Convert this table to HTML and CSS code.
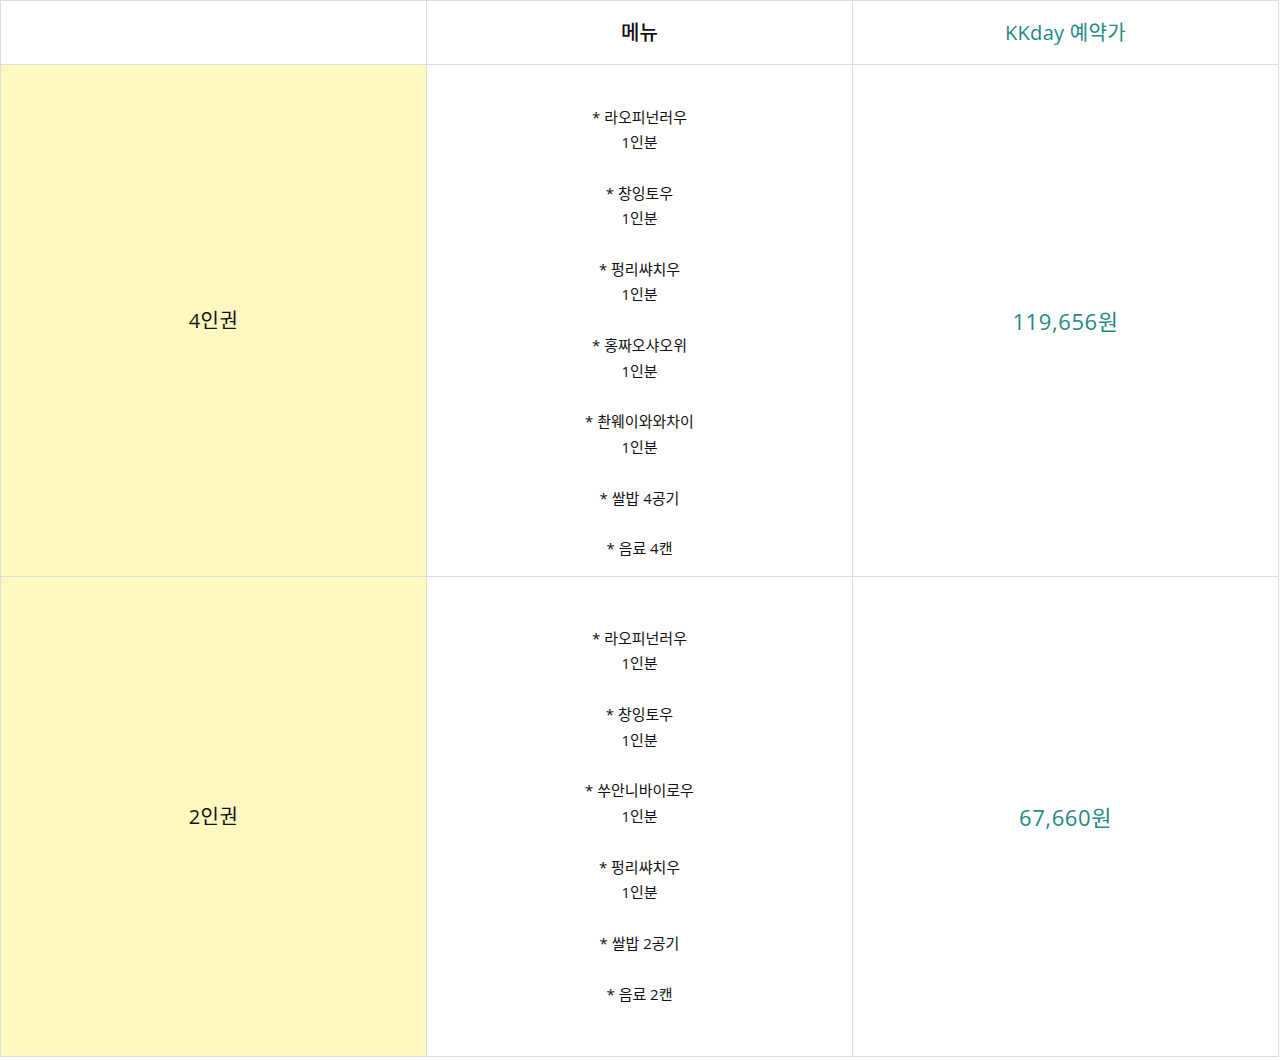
FILE: index.html
```html
<!DOCTYPE html>
<html lang="ko">
<head>
<meta charset="utf-8">
<title>메뉴</title>
<link rel="stylesheet" href="styles.css">
</head>
<body>
<table class="price-table">
  <colgroup>
    <col class="col">
    <col class="col">
    <col class="col">
  </colgroup>
  <thead>
    <tr class="head-row">
      <th class="head"></th>
      <th class="head head-menu">메뉴</th>
      <th class="head head-price">KKday 예약가</th>
    </tr>
  </thead>
  <tbody>
    <tr class="row-four">
      <td class="label">4인권</td>
      <td class="menu">
        <p class="line">&nbsp;</p>
        <p class="line">* 라오피넌러우</p>
        <p class="line">1인분</p>
        <p class="line">&nbsp;</p>
        <p class="line">* 창잉토우</p>
        <p class="line">1인분</p>
        <p class="line">&nbsp;</p>
        <p class="line">* 펑리쌰치우</p>
        <p class="line">1인분</p>
        <p class="line">&nbsp;</p>
        <p class="line">* 홍짜오샤오위</p>
        <p class="line">1인분</p>
        <p class="line">&nbsp;</p>
        <p class="line">* 촨웨이와와차이</p>
        <p class="line">1인분</p>
        <p class="line">&nbsp;</p>
        <p class="line">* 쌀밥 4공기</p>
        <p class="line">&nbsp;</p>
        <p class="line">* 음료 4캔</p>
      </td>
      <td class="price">119,656원</td>
    </tr>
    <tr class="row-two">
      <td class="label">2인권</td>
      <td class="menu">
        <p class="line">* 라오피넌러우</p>
        <p class="line">1인분</p>
        <p class="line">&nbsp;</p>
        <p class="line">* 창잉토우</p>
        <p class="line">1인분</p>
        <p class="line">&nbsp;</p>
        <p class="line">* 쑤안니바이로우</p>
        <p class="line">1인분</p>
        <p class="line">&nbsp;</p>
        <p class="line">* 펑리쌰치우</p>
        <p class="line">1인분</p>
        <p class="line">&nbsp;</p>
        <p class="line">* 쌀밥 2공기</p>
        <p class="line">&nbsp;</p>
        <p class="line">* 음료 2캔</p>
      </td>
      <td class="price">67,660원</td>
    </tr>
  </tbody>
</table>
</body>
</html>
```

FILE: styles.css
```css
html, body {
  margin: 0;
  padding: 0;
  background: #ffffff;
}

body {
  font-family: "Open Sans", "Noto Sans CJK KR", sans-serif;
  color: #111111;
}

.price-table {
  width: 1278px;
  border-collapse: collapse;
  table-layout: fixed;
}

.col {
  width: 426px;
}

.price-table th,
.price-table td {
  border: 1px solid #dddddd;
  text-align: center;
  vertical-align: middle;
  padding: 0;
}

.head-row {
  height: 64px;
}

.head {
  font-size: 20px;
  font-weight: 400;
  line-height: 28px;
  padding-bottom: 2px;
}

.head-menu {
  font-weight: 500;
  color: #111111;
}

.head-price {
  color: #1f8a86;
  letter-spacing: 0.3px;
}

.row-four {
  height: 512px;
}

.row-two {
  height: 480px;
}

.label {
  background: #fff8c0;
  font-size: 20px;
  line-height: 28px;
  color: #111111;
  letter-spacing: 0.5px;
  padding-bottom: 2px;
}

.menu {
  font-size: 15px;
  padding-bottom: 2px;
}

.line {
  margin: 0;
  line-height: 25.4px;
}

.price {
  font-size: 22px;
  line-height: 28px;
  color: #1f8a86;
  letter-spacing: 0.6px;
  padding-bottom: 2px;
}
```
